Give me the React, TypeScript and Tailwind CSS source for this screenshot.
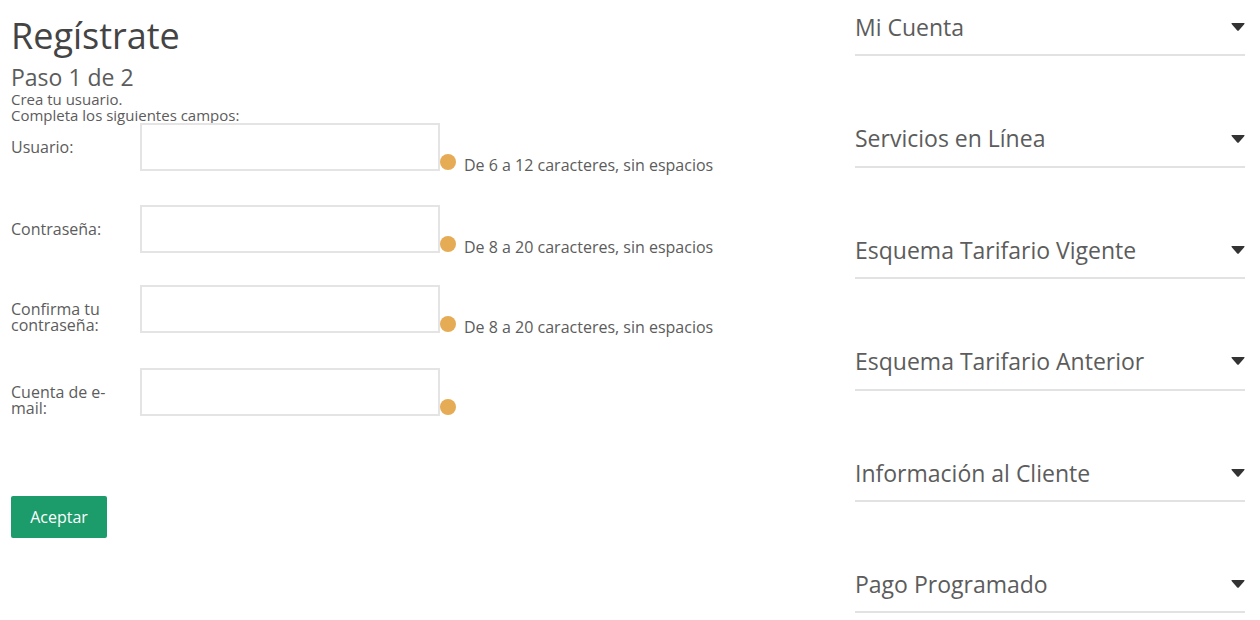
import { useState } from "react";

interface Field {
  id: string;
  label: string;
  type: string;
  hint?: string;
  row: string;
  labelPad: string;
}

const fields: Field[] = [
  { id: "usuario", label: "Usuario:", type: "text", hint: "De 6 a 12 caracteres, sin espacios", row: "h-[82px]", labelPad: "pt-4" },
  { id: "contrasena", label: "Contraseña:", type: "password", hint: "De 8 a 20 caracteres, sin espacios", row: "h-[80px]", labelPad: "pt-4" },
  { id: "confirma", label: "Confirma tu contraseña:", type: "password", hint: "De 8 a 20 caracteres, sin espacios", row: "h-[83px]", labelPad: "pt-4" },
  { id: "email", label: "Cuenta de e-mail:", type: "email", row: "h-[48px]", labelPad: "pt-4" },
];

const sections = [
  "Mi Cuenta",
  "Servicios en Línea",
  "Esquema Tarifario Vigente",
  "Esquema Tarifario Anterior",
  "Información al Cliente",
  "Pago Programado",
];

function FieldRow({ field }: { field: Field }) {
  return (
    <div className={`flex items-start ${field.row}`}>
      <label htmlFor={field.id} className={`w-[129px] shrink-0 pr-5 text-[16px] leading-4 ${field.labelPad}`}>
        {field.label}
      </label>
      <input
        id={field.id}
        type={field.type}
        className="h-12 w-[300px] shrink-0 border-2 border-[#e4e4e4] bg-white px-3 outline-none"
      />
      <span className="mt-[31px] h-4 w-4 shrink-0 rounded-full bg-[#e5ab55]" />
      {field.hint && <span className="mt-[34px] ml-2 text-[16px] leading-4 whitespace-nowrap">{field.hint}</span>}
    </div>
  );
}

export default function App() {
  const [open, setOpen] = useState<string | null>(null);

  return (
    <div className="flex h-[620px] w-[1260px] overflow-hidden bg-white font-['Open_Sans',sans-serif] text-[#5c5c5c]">
      <main className="w-[855px] shrink-0 pl-[11px]">
        <h1 className="pt-3 text-[36px] leading-[48px] text-[#444]">Regístrate</h1>
        <h2 className="pt-1 text-[23px] leading-[27px]">Paso 1 de 2</h2>
        <p className="text-[15px] leading-4">
          Crea tu usuario.
          <br />
          Completa los siguientes campos:
        </p>
        <form onSubmit={(e) => e.preventDefault()}>
          {fields.map((field) => (
            <FieldRow key={field.id} field={field} />
          ))}
          <button className="mt-20 h-[42px] w-[96px] rounded-xs bg-[#1c9c6b] text-[16px] text-white">Aceptar</button>
        </form>
      </main>

      <aside className="w-[390px]">
        {sections.map((title) => (
          <button
            key={title}
            onClick={() => setOpen(open === title ? null : title)}
            aria-expanded={open === title}
            className="mb-[55px] flex h-[56.4px] w-full items-center justify-between border-b-2 border-[#e2e2e2] text-left text-[23px] whitespace-nowrap"
          >
            {title}
            <svg viewBox="0 0 14 8" className="h-2 w-3.5 fill-[#333]">
              <path d="M1 0h12q1 0 .4 1L8 7.3q-1 1-2 0L.6 1Q0 0 1 0Z" />
            </svg>
          </button>
        ))}
      </aside>
    </div>
  );
}
